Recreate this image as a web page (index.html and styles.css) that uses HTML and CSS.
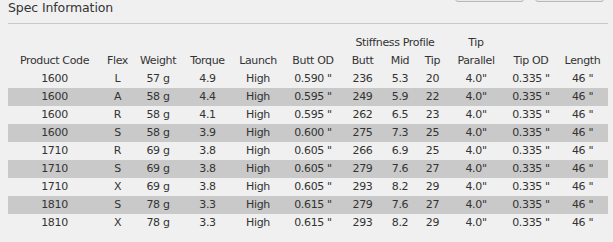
FILE: index.html
```html
<!DOCTYPE html>
<html>
<head>
<meta charset="utf-8">
<link rel="stylesheet" href="styles.css">
</head>
<body>
<div class="panel">
  <div class="panel-head">
    <h2 class="title">Spec Information</h2>
    <div class="actions">
      <span class="btn"></span>
      <span class="btn"></span>
    </div>
  </div>
  <table class="spec">
    <colgroup>
      <col class="c1"><col class="c2"><col class="c3"><col class="c4"><col class="c5"><col class="c6">
      <col class="c7"><col class="c8"><col class="c9"><col class="c10"><col class="c11"><col class="c12">
    </colgroup>
    <thead>
      <tr>
        <th></th><th></th><th></th><th></th><th></th><th></th>
        <th colspan="3">Stiffness Profile</th>
        <th>Tip</th><th></th><th></th>
      </tr>
      <tr>
        <th>Product Code</th><th>Flex</th><th>Weight</th><th>Torque</th><th>Launch</th><th>Butt OD</th>
        <th>Butt</th><th>Mid</th><th>Tip</th><th>Parallel</th><th>Tip OD</th><th>Length</th>
      </tr>
    </thead>
    <tbody>
      <tr><td>1600</td><td>L</td><td>57 g</td><td>4.9</td><td>High</td><td>0.590 "</td><td>236</td><td>5.3</td><td>20</td><td>4.0"</td><td>0.335 "</td><td>46 "</td></tr>
      <tr class="alt"><td>1600</td><td>A</td><td>58 g</td><td>4.4</td><td>High</td><td>0.595 "</td><td>249</td><td>5.9</td><td>22</td><td>4.0"</td><td>0.335 "</td><td>46 "</td></tr>
      <tr><td>1600</td><td>R</td><td>58 g</td><td>4.1</td><td>High</td><td>0.595 "</td><td>262</td><td>6.5</td><td>23</td><td>4.0"</td><td>0.335 "</td><td>46 "</td></tr>
      <tr class="alt"><td>1600</td><td>S</td><td>58 g</td><td>3.9</td><td>High</td><td>0.600 "</td><td>275</td><td>7.3</td><td>25</td><td>4.0"</td><td>0.335 "</td><td>46 "</td></tr>
      <tr><td>1710</td><td>R</td><td>69 g</td><td>3.8</td><td>High</td><td>0.605 "</td><td>266</td><td>6.9</td><td>25</td><td>4.0"</td><td>0.335 "</td><td>46 "</td></tr>
      <tr class="alt"><td>1710</td><td>S</td><td>69 g</td><td>3.8</td><td>High</td><td>0.605 "</td><td>279</td><td>7.6</td><td>27</td><td>4.0"</td><td>0.335 "</td><td>46 "</td></tr>
      <tr><td>1710</td><td>X</td><td>69 g</td><td>3.8</td><td>High</td><td>0.605 "</td><td>293</td><td>8.2</td><td>29</td><td>4.0"</td><td>0.335 "</td><td>46 "</td></tr>
      <tr class="alt"><td>1810</td><td>S</td><td>78 g</td><td>3.3</td><td>High</td><td>0.615 "</td><td>279</td><td>7.6</td><td>27</td><td>4.0"</td><td>0.335 "</td><td>46 "</td></tr>
      <tr><td>1810</td><td>X</td><td>78 g</td><td>3.3</td><td>High</td><td>0.615 "</td><td>293</td><td>8.2</td><td>29</td><td>4.0"</td><td>0.335 "</td><td>46 "</td></tr>
    </tbody>
  </table>
</div>
</body>
</html>
```

FILE: styles.css
```css
html, body {
  margin: 0;
  padding: 0;
  background: #f0f0f0;
}
body {
  font-family: "DejaVu Sans", Verdana, sans-serif;
  color: #333333;
}
.panel {
  padding: 0 5px 0 8px;
}
.panel-head {
  display: flex;
  justify-content: space-between;
  align-items: flex-start;
  height: 23px;
  border-bottom: 1px solid #c8c8c8;
}
.title {
  margin: 0;
  font-size: 12.5px;
  font-weight: normal;
  line-height: 15px;
  color: #333333;
  letter-spacing: -0.1px;
}
.actions {
  display: flex;
  gap: 11px;
  margin-right: 4px;
  margin-top: -20px;
}
.btn {
  display: block;
  width: 67px;
  height: 20px;
  border: 1px solid #b8b8b8;
  border-radius: 3px;
  background: #e9e9e9;
}
.spec {
  margin-top: 10px;
  width: 600px;
  border-collapse: collapse;
  table-layout: fixed;
  font-size: 11px;
  letter-spacing: -0.35px;
}
.spec th, .spec td {
  height: 18px;
  padding: 0;
  text-align: center;
  vertical-align: middle;
  font-weight: normal;
  white-space: nowrap;
  line-height: 18px;
}
.spec tr.alt td {
  background: #c9c9c9;
}
.c1 { width: 93px; }
.c2 { width: 33px; }
.c3 { width: 48px; }
.c4 { width: 51px; }
.c5 { width: 50px; }
.c6 { width: 60px; }
.c7 { width: 39px; }
.c8 { width: 36px; }
.c9 { width: 29px; }
.c10 { width: 58px; }
.c11 { width: 52px; }
.c12 { width: 51px; }
```
